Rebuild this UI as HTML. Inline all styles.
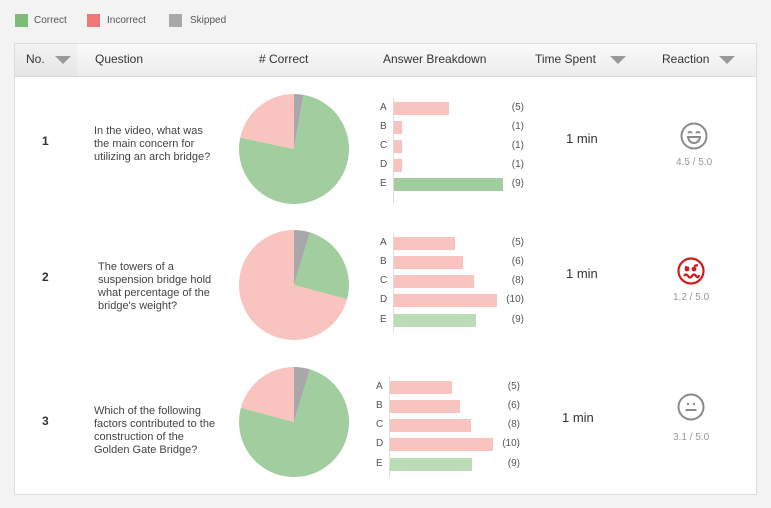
<!DOCTYPE html>
<html><head><meta charset="utf-8"><style>
*{margin:0;padding:0;box-sizing:border-box}
body{width:771px;height:508px;background:#f3f3f3;font-family:"Liberation Sans",sans-serif;position:relative;overflow:hidden;color:#333}
.a{position:absolute;white-space:nowrap}
.box{position:absolute;left:14px;top:43px;width:743px;height:452px;background:#fff;border:1px solid #dcdcdc}
.hdr{position:absolute;left:14px;top:43px;width:743px;height:34px;background:linear-gradient(#fafafa,#ececec);border:1px solid #dcdcdc}
.h{font-size:12px;color:#333;top:52px}
.tri{display:inline-block;width:0;height:0;border-left:8px solid transparent;border-right:8px solid transparent;border-top:8px solid #999;vertical-align:middle;margin-left:10px}
.q{font-size:11px;line-height:13px;color:#444}
.n{font-size:12px;font-weight:bold;color:#333}
.l{font-size:10px;color:#555;width:10px}
.c{font-size:10px;color:#555;width:30px;text-align:right}
.bar{position:absolute;height:13px}
.r{background:#f9c4c0}.g{background:#a2cd9e}.g2{background:#bcdcb8}
.ax{position:absolute;width:1px;background:#ddd}
.t{font-size:13px;color:#333}
.s{font-size:10px;color:#999}
</style></head><body>
<div class="a" style="left:15px;top:14px;width:13px;height:13px;background:#7dbb78"></div>
<div class="a" style="left:34px;top:15px;font-size:10px;color:#555">Correct</div>
<div class="a" style="left:87px;top:14px;width:13px;height:13px;background:#f07777"></div>
<div class="a" style="left:107px;top:15px;font-size:10px;color:#555">Incorrect</div>
<div class="a" style="left:169px;top:14px;width:13px;height:13px;background:#a8a8ab"></div>
<div class="a" style="left:190px;top:15px;font-size:10px;color:#555">Skipped</div>

<div class="box"></div>
<div class="hdr"></div>
<div class="a" style="left:15px;top:44px;width:62px;height:32px;background:linear-gradient(#f2f2f2,#e6e6e6)"></div>
<div class="a h" style="left:26px">No.<span class="tri"></span></div>
<div class="a h" style="left:95px">Question</div>
<div class="a h" style="left:259px">#  Correct</div>
<div class="a h" style="left:383px">Answer Breakdown</div>
<div class="a h" style="left:535px">Time Spent<span class="tri" style="margin-left:14px"></span></div>
<div class="a h" style="left:662px">Reaction<span class="tri"></span></div>

<!-- Row 1 -->
<div class="a n" style="left:42px;top:134px">1</div>
<div class="a q" style="left:94px;top:125px">In the video, what was<br>the main concern for<br>utilizing an arch bridge?</div>
<svg class="a" style="left:239px;top:94px" width="110" height="110" viewBox="-55 -55 110 110">
<path d="M0 0L0 -55A55 55 0 0 1 9.55 -54.16Z" fill="#a8a8ab"/>
<path d="M0 0L9.55 -54.16A55 55 0 1 1 -53.8 -11.4Z" fill="#a2cd9e"/>
<path d="M0 0L-53.8 -11.4A55 55 0 0 1 0 -55Z" fill="#f9c4c0"/></svg>
<div class="ax" style="left:393px;top:98px;height:106px"></div>
<div class="a l" style="left:380px;top:102px">A</div><div class="bar r" style="left:394px;top:102px;width:55px"></div><div class="a c" style="left:494px;top:102px">(5)</div>
<div class="a l" style="left:380px;top:121px">B</div><div class="bar r" style="left:394px;top:121px;width:8px"></div><div class="a c" style="left:494px;top:121px">(1)</div>
<div class="a l" style="left:380px;top:140px">C</div><div class="bar r" style="left:394px;top:140px;width:8px"></div><div class="a c" style="left:494px;top:140px">(1)</div>
<div class="a l" style="left:380px;top:159px">D</div><div class="bar r" style="left:394px;top:159px;width:8px"></div><div class="a c" style="left:494px;top:159px">(1)</div>
<div class="a l" style="left:380px;top:178px">E</div><div class="bar g" style="left:394px;top:178px;width:109px"></div><div class="a c" style="left:494px;top:178px">(9)</div>
<div class="a t" style="left:566px;top:131px">1 min</div>
<svg class="a" style="left:680px;top:122px" width="28" height="28" viewBox="0 0 28 28" fill="none" stroke="#8a8a8a" stroke-width="2">
<circle cx="14" cy="14" r="12.5"/><path d="M8 11q2-2 4 0M16 11q2-2 4 0"/><path d="M8 15h12q-1 6-6 6t-6-6z" fill="none"/></svg>
<div class="a s" style="left:676px;top:157px">4.5 / 5.0</div>

<!-- Row 2 -->
<div class="a n" style="left:42px;top:270px">2</div>
<div class="a q" style="left:98px;top:261px">The towers of a<br>suspension bridge hold<br>what percentage of the<br>bridge's weight?</div>
<svg class="a" style="left:239px;top:230px" width="110" height="110" viewBox="-55 -55 110 110">
<path d="M0 0L0 -55A55 55 0 0 1 16.1 -52.6Z" fill="#a8a8ab"/>
<path d="M0 0L16.1 -52.6A55 55 0 0 1 53.1 14.2Z" fill="#a2cd9e"/>
<path d="M0 0L53.1 14.2A55 55 0 1 1 0 -55Z" fill="#f9c4c0"/></svg>
<div class="ax" style="left:393px;top:233px;height:100px"></div>
<div class="a l" style="left:380px;top:237px">A</div><div class="bar r" style="left:394px;top:237px;width:61px"></div><div class="a c" style="left:494px;top:237px">(5)</div>
<div class="a l" style="left:380px;top:256px">B</div><div class="bar r" style="left:394px;top:256px;width:69px"></div><div class="a c" style="left:494px;top:256px">(6)</div>
<div class="a l" style="left:380px;top:275px">C</div><div class="bar r" style="left:394px;top:275px;width:80px"></div><div class="a c" style="left:494px;top:275px">(8)</div>
<div class="a l" style="left:380px;top:294px">D</div><div class="bar r" style="left:394px;top:294px;width:103px"></div><div class="a c" style="left:494px;top:294px">(10)</div>
<div class="a l" style="left:380px;top:314px">E</div><div class="bar g2" style="left:394px;top:314px;width:82px"></div><div class="a c" style="left:494px;top:314px">(9)</div>
<div class="a t" style="left:566px;top:266px">1 min</div>
<svg class="a" style="left:677px;top:257px" width="28" height="28" viewBox="0 0 28 28" fill="none" stroke="#d21c1c" stroke-width="2.2">
<circle cx="14" cy="14" r="12.5"/><path d="M8 10l4 1M17 9l4-1" /><circle cx="10" cy="12" r="1.3" fill="#d21c1c"/><circle cx="17" cy="12" r="1.3" fill="#d21c1c"/><path d="M7 19q2-3 4 0t4 0 4 0 3-1"/></svg>
<div class="a s" style="left:673px;top:292px">1.2 / 5.0</div>

<!-- Row 3 -->
<div class="a n" style="left:42px;top:414px">3</div>
<div class="a q" style="left:94px;top:405px">Which of the following<br>factors contributed to the<br>construction of the<br>Golden Gate Bridge?</div>
<svg class="a" style="left:239px;top:367px" width="110" height="110" viewBox="-55 -55 110 110">
<path d="M0 0L0 -55A55 55 0 0 1 16.1 -52.6Z" fill="#a8a8ab"/>
<path d="M0 0L16.1 -52.6A55 55 0 1 1 -53.1 -14.2Z" fill="#a2cd9e"/>
<path d="M0 0L-53.1 -14.2A55 55 0 0 1 0 -55Z" fill="#f9c4c0"/></svg>
<div class="ax" style="left:389px;top:377px;height:100px"></div>
<div class="a l" style="left:376px;top:381px">A</div><div class="bar r" style="left:390px;top:381px;width:62px"></div><div class="a c" style="left:490px;top:381px">(5)</div>
<div class="a l" style="left:376px;top:400px">B</div><div class="bar r" style="left:390px;top:400px;width:70px"></div><div class="a c" style="left:490px;top:400px">(6)</div>
<div class="a l" style="left:376px;top:419px">C</div><div class="bar r" style="left:390px;top:419px;width:81px"></div><div class="a c" style="left:490px;top:419px">(8)</div>
<div class="a l" style="left:376px;top:438px">D</div><div class="bar r" style="left:390px;top:438px;width:103px"></div><div class="a c" style="left:490px;top:438px">(10)</div>
<div class="a l" style="left:376px;top:458px">E</div><div class="bar g2" style="left:390px;top:458px;width:82px"></div><div class="a c" style="left:490px;top:458px">(9)</div>
<div class="a t" style="left:562px;top:410px">1 min</div>
<svg class="a" style="left:677px;top:393px" width="28" height="28" viewBox="0 0 28 28" fill="none" stroke="#8a8a8a" stroke-width="2">
<circle cx="14" cy="14" r="12.5"/><circle cx="11" cy="11" r="1.2" fill="#8a8a8a" stroke="none"/><circle cx="17" cy="11" r="1.2" fill="#8a8a8a" stroke="none"/><path d="M8.5 17h11"/></svg>
<div class="a s" style="left:673px;top:432px">3.1 / 5.0</div>
</body></html>
